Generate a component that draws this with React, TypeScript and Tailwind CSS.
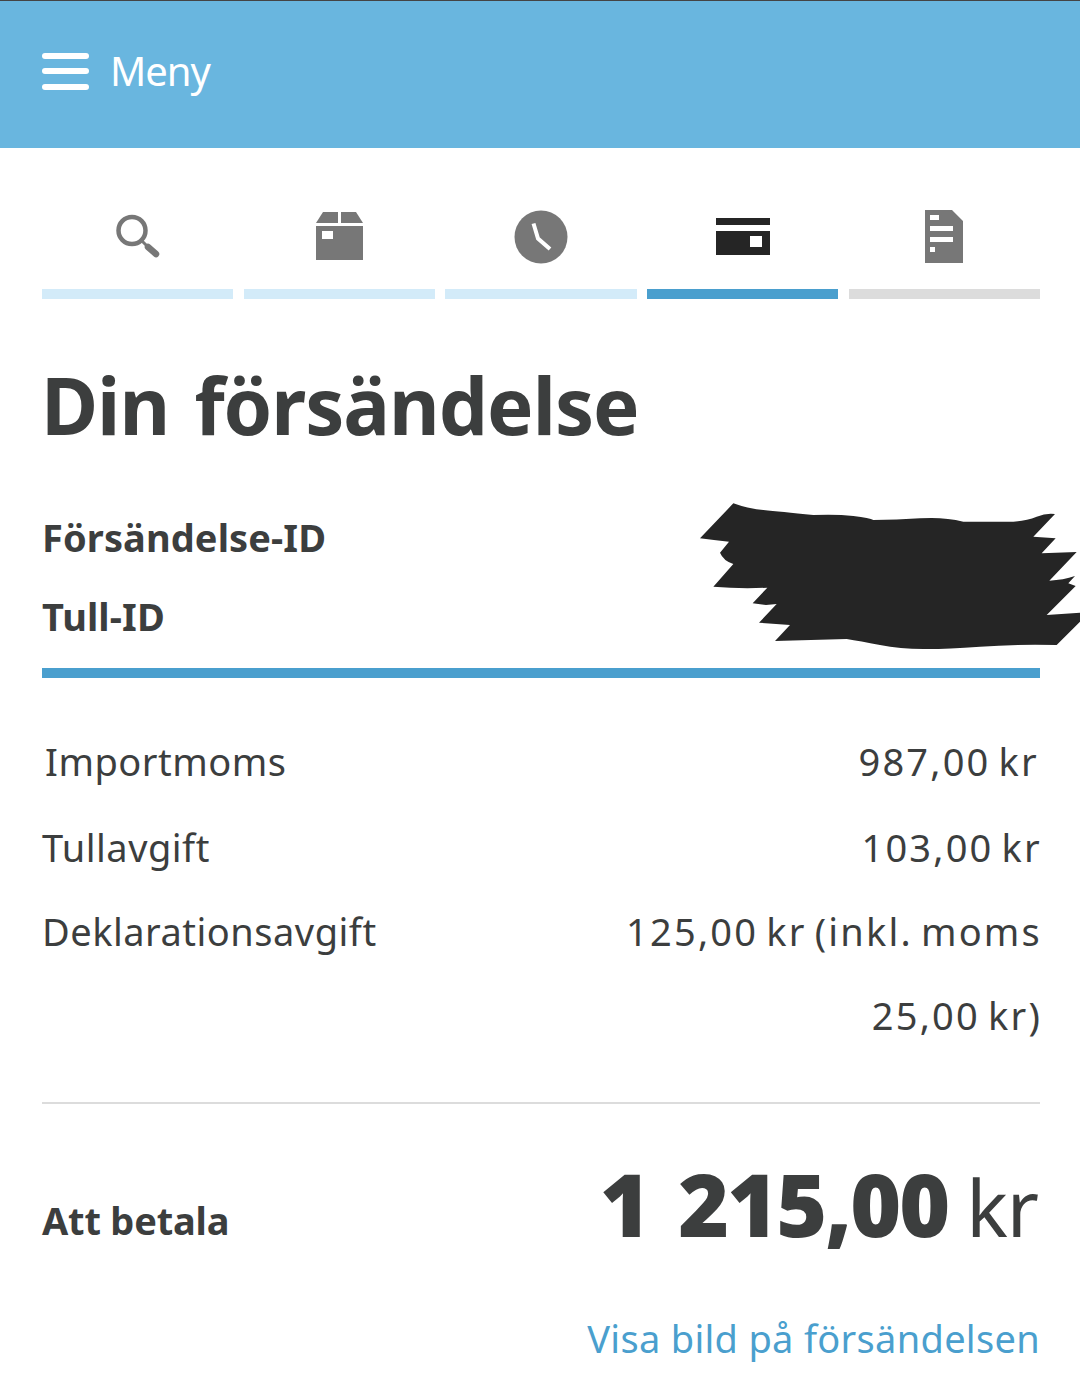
const tabs = [
  { bar: "bg-[#d3ebf9]", icon: <SearchIcon /> },
  { bar: "bg-[#d3ebf9]", icon: <BoxIcon /> },
  { bar: "bg-[#d3ebf9]", icon: <ClockIcon /> },
  { bar: "bg-[#4a9fce]", icon: <CardIcon /> },
  { bar: "bg-[#dcdcdc]", icon: <DocIcon /> },
];

function SearchIcon() {
  return (
    <svg width="44" height="44" viewBox="0 0 44 44" fill="none" className="mt-[4px]">
      <circle cx="16" cy="16.500" r="13.500" stroke="#777" strokeWidth="4.500" />
      <path d="M26 27l6 6" stroke="#777" strokeWidth="3" />
      <path d="M32 33l8 7" stroke="#777" strokeWidth="6.500" strokeLinecap="round" />
    </svg>
  );
}

function BoxIcon() {
  return (
    <svg width="47" height="48" viewBox="0 0 47 48" fill="#777" className="ml-[1px] mt-[2px]">
      <path d="M7 0h15v11h-22z" />
      <path d="M25 0h15l7 11h-22z" />
      <path fillRule="evenodd" d="M0 14h47v34h-47zM6 19v8h11v-8z" />
    </svg>
  );
}

function ClockIcon() {
  return (
    <svg width="54" height="54" viewBox="0 0 54 54" className="ml-[1px]">
      <circle cx="27" cy="27" r="26.500" fill="#777" />
      <path d="M19.500 13.500l4.500 15 12 10.500" fill="none" stroke="#fff" strokeWidth="4" />
    </svg>
  );
}

function CardIcon() {
  return (
    <svg width="54" height="38" viewBox="0 0 54 38" fill="#252525" className="mt-[8px]">
      <path d="M0 0h54v7h-54z" />
      <path fillRule="evenodd" d="M0 13h54v24h-54zM34 18v11h12v-11z" />
    </svg>
  );
}

function DocIcon() {
  return (
    <svg width="38" height="53" viewBox="0 0 38 53" fill="#777">
      <path
        fillRule="evenodd"
        d="M0 0h27l11 11v42h-38zM5 5v5h9v-5zM5 16v5h23v-5zM5 27v5h23v-5zM5 37v5h5v-5z"
      />
    </svg>
  );
}

function Row({ label, value, className }: { label: string; value: string; className?: string }) {
  return (
    <div className={`flex justify-between ${className ?? ""}`}>
      <span className="tracking-[0.5px]">{label}</span>
      <span className="-mr-[2px] tracking-[2.200px] [word-spacing:-4px]">{value}</span>
    </div>
  );
}

export default function App() {
  return (
    <div className="min-h-[1397px] bg-white text-[#3c3e3e] font-['Noto_Sans','Open_Sans',sans-serif]">
      {/* Header */}
      <header className="flex h-[148px] items-center gap-[21px] border-t border-[#444] bg-[#69b6df] pl-[42px] pb-[7px]">
        <div className="flex w-[47px] flex-col gap-[9.500px]">
          <div className="h-[6px] rounded-full bg-white" />
          <div className="h-[6px] rounded-full bg-white" />
          <div className="h-[6px] rounded-full bg-white" />
        </div>
        <span className="text-[40px] leading-none tracking-[-1px] text-white">Meny</span>
      </header>

      <main className="px-[40px] pl-[42px]">
        {/* Steps */}
        <div className="grid grid-cols-5 gap-[10.500px] pt-[62px]">
          {tabs.map((tab, i) => (
            <div key={i} className="flex flex-col">
              <div className="flex h-[79px] justify-center">{tab.icon}</div>
              <div className={`h-[10px] ${tab.bar}`} />
            </div>
          ))}
        </div>

        <h1 className="mt-[56px] -ml-[1px] text-[78px] font-bold leading-[100px] tracking-[-1px] [word-spacing:6px]">
          Din försändelse
        </h1>

        {/* IDs */}
        <div className="relative mt-[56px] border-b-[10px] border-[#4a9fce] pb-[26px] text-[38px] font-bold tracking-[0.1px]">
          <div className="h-[52px] leading-[52px]">Försändelse-ID</div>
          <div className="mt-[27px] h-[52px] leading-[52px]">Tull-ID</div>
          <svg
            width="400"
            height="200"
            viewBox="0 0 1200 600"
            fill="#252525"
            className="absolute left-[638px] top-[-21px]"
          >
            <path d="M160 40Q200 55 250 60T400 75Q470 72 520 78T580 90Q650 90 720 85T850 95L1000 95Q1040 92 1070 80T1125 72L1060 140L1127 145L1085 190L1190 186L1108 272Q1150 270 1185 258L1165 280L1187 288L1100 375L1200 368L1200 395L1130 465Q1010 462 900 470T730 477Q660 477 600 465T500 447L285 453L330 405L237 398L290 342L258 345L218 340L262 293Q180 297 100 290L160 222Q130 212 120 188L147 155Q100 150 60 145Z" />
          </svg>
        </div>

        {/* Cost rows */}
        <div className="border-b-2 border-[#dcdcdc] pb-[61px] pt-[57px] text-[38px] leading-[52px]">
          <Row label="Importmoms" value="987,00 kr" className="pl-[3px] pr-[3px]" />
          <Row label="Tullavgift" value="103,00 kr" className="mt-[34px]" />
          <Row label="Deklarationsavgift" value="125,00 kr (inkl. moms" className="mt-[32px]" />
          <div className="mt-[32px] -mr-[2px] text-right tracking-[2.200px] [word-spacing:-4px]">25,00 kr)</div>
        </div>

        {/* Total */}
        <div className="mt-[49px] flex items-center justify-between">
          <span className="mt-[31px] text-[38px] font-bold tracking-[-0.2px]">Att betala</span>
          <span className="flex items-baseline gap-[18px] leading-[100px]">
            <span className="text-[87px] font-black tracking-[-2px] [word-spacing:9px]">1 215,00</span>
            <span className="mr-[2px] text-[78px] tracking-[-1px]">kr</span>
          </span>
        </div>

        <div className="mt-[55px] text-right text-[38px] leading-[52px] tracking-[0.3px] text-[#4a9fce]">
          Visa bild på försändelsen
        </div>
      </main>
    </div>
  );
}
